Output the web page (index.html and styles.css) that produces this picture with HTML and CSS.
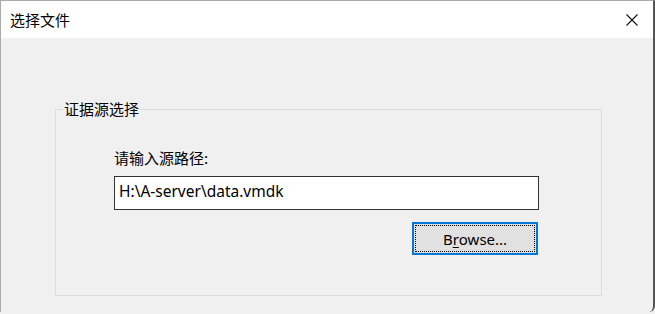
FILE: index.html
```html
<!DOCTYPE html>
<html lang="zh-CN">
<head>
    <meta charset="UTF-8">
    <title>选择文件</title>
    <link rel="stylesheet" href="styles.css">
</head>
<body>
    <div class="window">
        <div class="titlebar">
            <span class="title">选择文件</span>
            <span class="close">
                <svg width="12" height="12" viewBox="0 0 12 12">
                    <path d="M0.5 0.5 L11.5 11.5 M11.5 0.5 L0.5 11.5" stroke="#111" stroke-width="1.1" fill="none"/>
                </svg>
            </span>
        </div>
        <div class="content">
            <fieldset class="group">
                <legend>证据源选择</legend>
                <div class="group-body">
                    <label for="path" class="field-label">请输入源路径:</label>
                    <input type="text" id="path" class="path-input" value="H:\A-server\data.vmdk">
                    <div class="actions">
                        <button type="button" class="browse"><span class="focus">B<u>r</u>owse...</span></button>
                    </div>
                </div>
            </fieldset>
        </div>
    </div>
</body>
</html>
```

FILE: styles.css
```css
:root {
    --face-color: #f0f0f0;
    --group-border: #dcdcdc;
    --accent-color: #0078d7;
    --text-color: #000;
}

* {
    margin: 0;
    padding: 0;
    box-sizing: border-box;
}

body {
    font-family: "Noto Sans", "Noto Sans CJK SC", sans-serif;
    color: var(--text-color);
    background-color: var(--face-color);
    width: 655px;
    height: 314px;
    overflow: hidden;
}

.window {
    height: 312px;
    border-left: 1px solid #aaa;
    border-top: 1px solid #aaa;
    border-right: 2px solid #555;
    border-bottom-right-radius: 6px;
    background-color: var(--face-color);
}

.titlebar {
    height: 37px;
    background-color: #fff;
    display: flex;
    align-items: center;
    justify-content: space-between;
    padding: 0 15px 0 9px;
}

.title {
    font-size: 15px;
    font-family: "Noto Sans CJK SC", sans-serif;
}

.close {
    display: flex;
    margin-top: 1px;
}

.content {
    padding: 62px 0 0 54px;
}

.group {
    width: 547px;
    height: 196px;
    border: 1px solid var(--group-border);
    padding: 0;
}

.group legend {
    margin-left: 7px;
    padding: 0 2px 0 1px;
    font-size: 15px;
    line-height: 18px;
    font-family: "Noto Sans CJK SC", sans-serif;
}

.group-body {
    padding: 31px 0 0 58px;
    width: 483px;
}

.field-label {
    display: block;
    font-size: 15px;
    line-height: 18px;
    font-family: "Noto Sans CJK SC", sans-serif;
    margin-bottom: 9px;
}

.path-input {
    display: block;
    width: 425px;
    height: 34px;
    border: 1px solid #333;
    background-color: #fff;
    padding: 0 4px 4px;
    font-family: "Noto Sans", sans-serif;
    font-size: 15.5px;
    color: #000;
    outline: none;
}

.actions {
    display: flex;
    justify-content: flex-end;
    padding-top: 12px;
}

.browse {
    width: 126px;
    height: 33px;
    margin-right: 1px;
    border: 2px solid var(--accent-color);
    background-color: #e1e1e1;
    padding: 1px;
    font-family: "Noto Sans", sans-serif;
    font-size: 15px;
    color: #000;
}

.browse .focus {
    display: flex;
    align-items: center;
    justify-content: center;
    height: 100%;
    border: 1px dotted #000;
}

.browse u {
    text-underline-offset: 2px;
}
```
